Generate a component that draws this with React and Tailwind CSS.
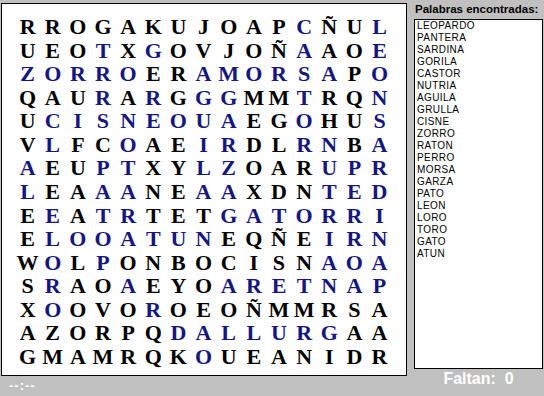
import React from "react";

const ROWS = [
  ["RROGAKUJOAPCÑUL", "000000000001001"],
  ["UEOTXGOVJOÑAAOE", "000101000001001"],
  ["ZORROERAMORSAPO", "111110011111101"],
  ["QAURARGGGMMTRQN", "000101011001001"],
  ["UCISNEOUAEGOHUS", "011111111001001"],
  ["VLFCOAEIRDLRNBA", "010010011001101"],
  ["AEUPTXYLZOARUPR", "100110011000111"],
  ["LEAAANEAAXDNTED", "100110011000111"],
  ["EEATRTETGATORRI", "010110001111111"],
  ["ELOOATUNEQÑEIRN", "011111110000111"],
  ["WOLPONBOCISNAOA", "010100000000111"],
  ["SRAOAEYOARETNAP", "010010001111111"],
  ["XOOVOROEOÑMMRSA", "010001000000000"],
  ["AZORPQDALLURGAA", "000000111111100"],
  ["GMAMRQKOUEANIDR", "000000010000000"],
];

const WORDS = [
  "LEOPARDO", "PANTERA", "SARDINA", "GORILA", "CASTOR", "NUTRIA", "AGUILA",
  "GRULLA", "CISNE", "ZORRO", "RATON", "PERRO", "MORSA", "GARZA", "PATO",
  "LEON", "LORO", "TORO", "GATO", "ATUN",
];

export default function App() {
  const cells = [];
  ROWS.forEach(([letters, mask], r) => {
    Array.from(letters).forEach((ch, c) => {
      cells.push(
        <div
          key={`${r}-${c}`}
          className={`flex items-center justify-center ${
            mask[c] === "1" ? "text-[#16167f]" : "text-black"
          }`}
        >
          {ch}
        </div>
      );
    });
  });

  return (
    <div className="w-[544px] h-[396px] bg-[#c0c0c0] overflow-hidden font-['Liberation_Sans',Arial,sans-serif]">
      <div className="flex">
        <div className="flex flex-col">
          <div className="ml-[1px] mt-[3px] w-[406px] h-[373px] border border-black bg-white pl-[13px] pt-[11px]">
            <div className="grid grid-cols-[repeat(15,25.15px)] grid-rows-[repeat(15,23.57px)] font-['Liberation_Serif','Times_New_Roman',serif] font-bold text-[22px] leading-[23.57px]">
              {cells}
            </div>
          </div>
          <div className="pl-[9px] h-[20px] leading-[20px] text-[13px] font-bold text-white tracking-[1px]">
            --:--
          </div>
        </div>
        <div className="ml-[7px] flex flex-col w-[129px]">
          <div className="h-[19px] leading-[19px] text-[11.5px] font-bold text-black pl-[1px] whitespace-nowrap">
            Palabras encontradas:
          </div>
          <div className="h-[350px] border border-black bg-white pl-[2px] text-[10px] leading-[12px] tracking-[0.4px] text-black">
            {WORDS.map((w) => (
              <div key={w}>{w}</div>
            ))}
          </div>
          <div className="h-[20px] leading-[20px] text-center text-[16px] font-bold text-white whitespace-pre">
            {"Faltan:  0"}
          </div>
        </div>
      </div>
    </div>
  );
}
